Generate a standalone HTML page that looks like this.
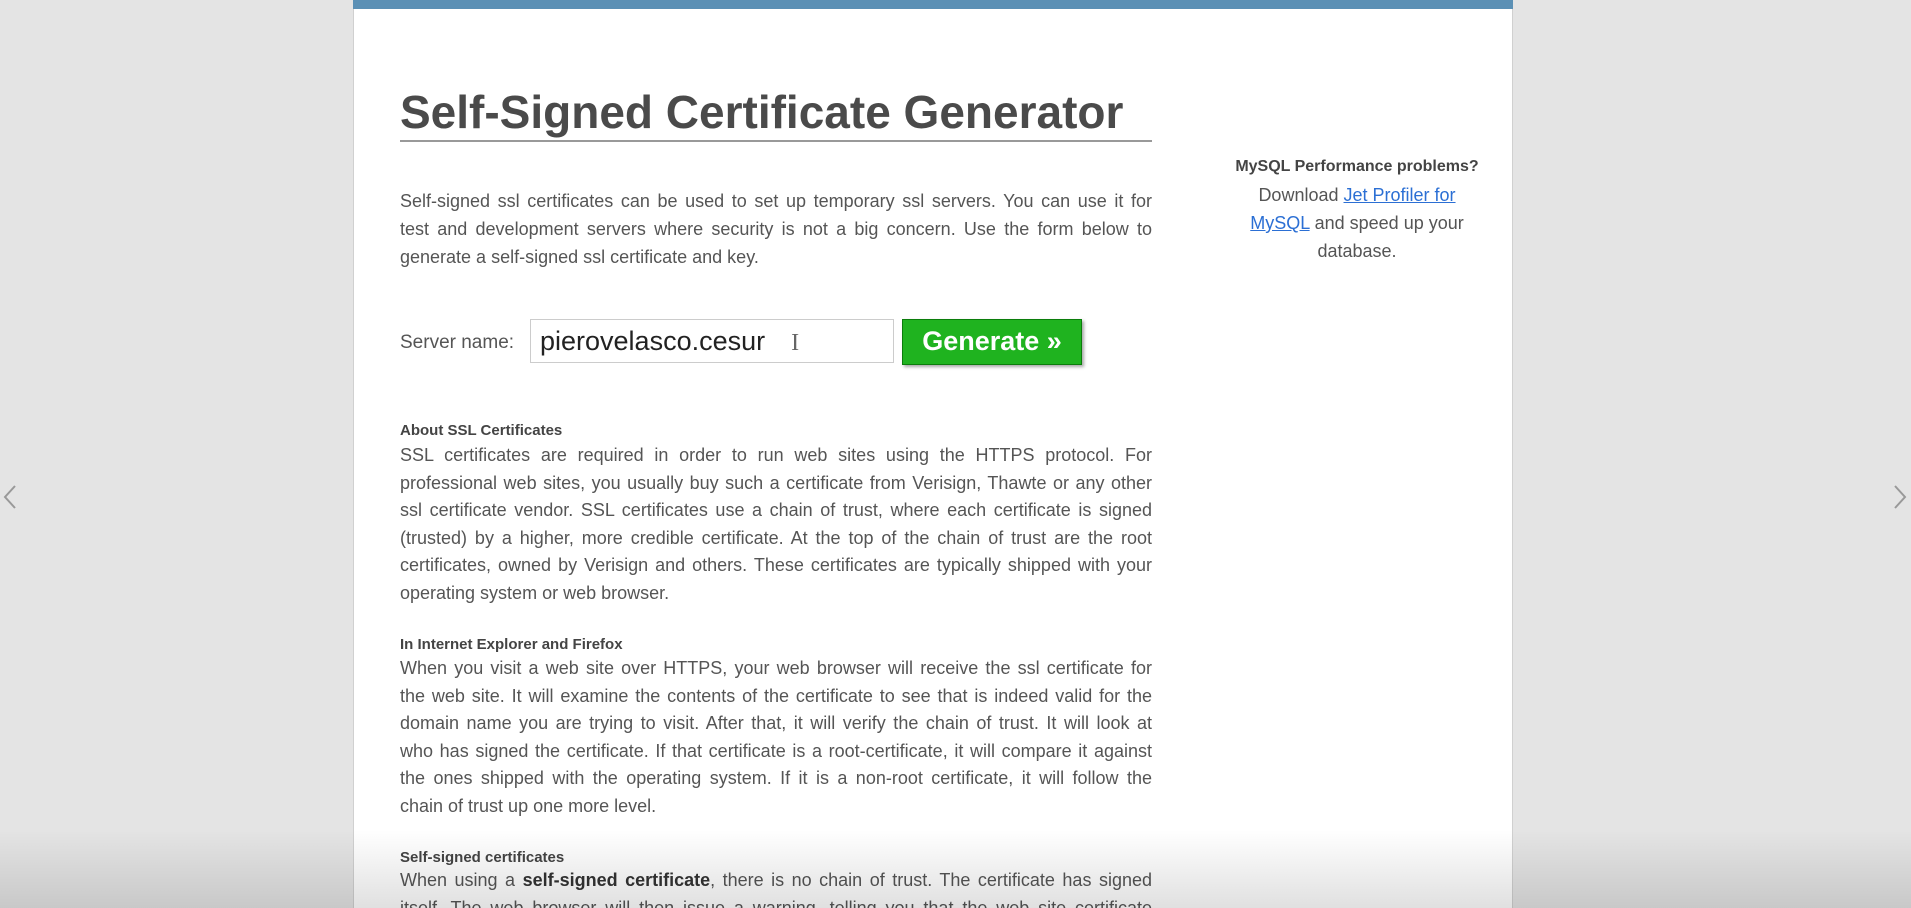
<!DOCTYPE html>
<html><head><meta charset="utf-8"><style>
html,body{margin:0;padding:0;width:1911px;height:908px;overflow:hidden}
body{background:#e4e4e4;font-family:"Liberation Sans",Arial,sans-serif;color:#555;position:relative}
.panel{position:absolute;left:353px;top:0;width:1158px;height:908px;background:#fff;border-left:1px solid #d0d0d0;border-right:1px solid #d0d0d0}
.bar{position:absolute;left:353px;top:0;width:1160px;height:9px;background:#5b90b5}
.a{position:absolute}
h1{position:absolute;left:400px;top:86px;margin:0;font-size:46px;font-weight:bold;color:#4a4a4a;width:752px;border-bottom:2px solid #999;padding-bottom:2px;line-height:52px}
.j{position:absolute;left:400px;width:752px;font-size:18px;color:#555}
.j div{text-align:justify;text-align-last:justify;height:28px;line-height:28px;white-space:nowrap}
.j div.l{text-align-last:left}
.j.s div{height:27.6px;line-height:27.6px}
.h{position:absolute;left:400px;font-size:15px;font-weight:bold;color:#444}
.side{position:absolute;left:1220px;width:274px;text-align:center;font-size:18px;color:#555;line-height:28px}
a{color:#2b6fd4;text-decoration:underline}
.fade{position:absolute;left:0;top:830px;width:1911px;height:78px;background:linear-gradient(to bottom,rgba(0,0,0,0),rgba(0,0,0,0.12))}
.wrap{position:absolute;left:0;top:0;width:1911px;height:908px;overflow:hidden}
</style></head><body><div class="wrap">
<div class="panel"></div>
<div class="bar"></div>
<h1>Self-Signed Certificate Generator</h1>
<div class="j" style="top:187px"><div>Self-signed ssl certificates can be used to set up temporary ssl servers. You can use it for</div><div>test and development servers where security is not a big concern. Use the form below to</div><div class="l">generate a self-signed ssl certificate and key.</div></div>
<div class="a" style="left:400px;top:332px;font-size:19px;color:#555">Server name:</div>
<div class="a" style="left:530px;top:319px;width:364px;height:44px;border:1px solid #ccc;box-sizing:border-box;font-size:27px;color:#222;line-height:42px;padding-left:9px">pierovelasco.cesur<span style="color:#666;font-size:24px;margin-left:26px;font-family:'Liberation Serif',serif">I</span></div>
<div class="a" style="left:902px;top:319px;width:180px;height:46px;background:#1fb31f;border:1px solid #0b7d0b;box-sizing:border-box;box-shadow:2px 2px 3px rgba(0,0,0,0.35);color:#fff;font-weight:bold;font-size:27px;text-align:center;line-height:43px">Generate »</div>
<div class="h" style="top:422px">About SSL Certificates</div>
<div class="j s" style="top:442px"><div>SSL certificates are required in order to run web sites using the HTTPS protocol. For</div><div>professional web sites, you usually buy such a certificate from Verisign, Thawte or any other</div><div>ssl certificate vendor. SSL certificates use a chain of trust, where each certificate is signed</div><div>(trusted) by a higher, more credible certificate. At the top of the chain of trust are the root</div><div>certificates, owned by Verisign and others. These certificates are typically shipped with your</div><div class="l">operating system or web browser.</div></div>
<div class="h" style="top:636px">In Internet Explorer and Firefox</div>
<div class="j s" style="top:655px"><div>When you visit a web site over HTTPS, your web browser will receive the ssl certificate for</div><div>the web site. It will examine the contents of the certificate to see that is indeed valid for the</div><div>domain name you are trying to visit. After that, it will verify the chain of trust. It will look at</div><div>who has signed the certificate. If that certificate is a root-certificate, it will compare it against</div><div>the ones shipped with the operating system. If it is a non-root certificate, it will follow the</div><div class="l">chain of trust up one more level.</div></div>
<div class="h" style="top:849px">Self-signed certificates</div>
<div class="j s" style="top:867px"><div>When using a <b style="color:#333">self-signed certificate</b>, there is no chain of trust. The certificate has signed</div><div>itself. The web browser will then issue a warning, telling you that the web site certificate</div></div>
<div class="side" style="top:153px;font-size:16px;font-weight:bold;color:#444">MySQL Performance problems?</div>
<div class="side" style="top:181px">Download <a>Jet Profiler for</a><br><a>MySQL</a> and speed up your<br>database.</div>
<svg class="a" style="left:2px;top:484px" width="16" height="26"><path d="M13 2 L3 13 L13 24" fill="none" stroke="#999" stroke-width="2"/></svg>
<svg class="a" style="left:1892px;top:484px" width="16" height="26"><path d="M3 2 L13 13 L3 24" fill="none" stroke="#999" stroke-width="2"/></svg>
<div class="fade"></div>
</div></body></html>
